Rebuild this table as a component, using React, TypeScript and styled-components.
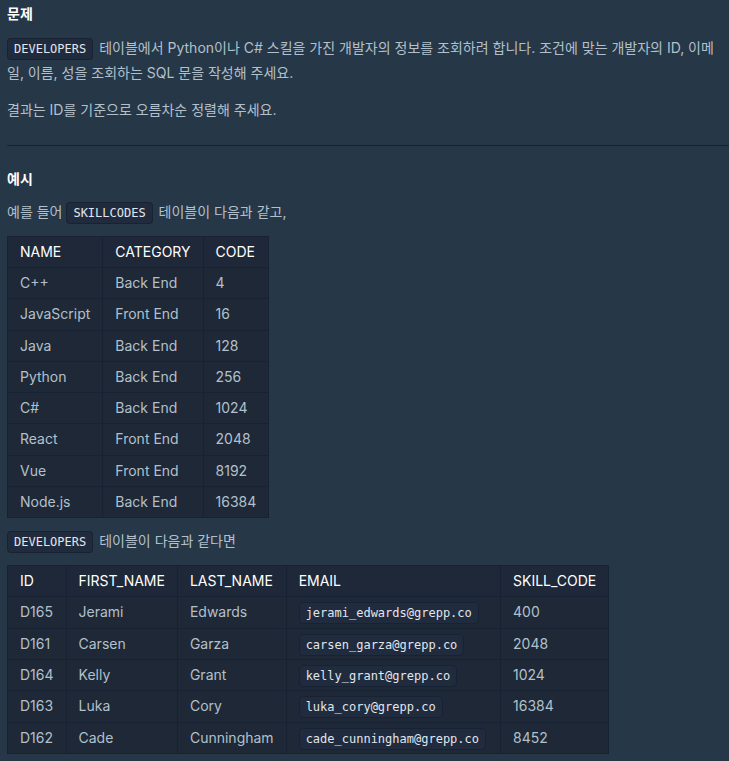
import React from "react";
import styled, { createGlobalStyle } from "styled-components";

const GlobalStyle = createGlobalStyle`
  html, body {
    margin: 0;
    padding: 0;
    background: #263747;
  }
  body {
    font-family: Inter, "Noto Sans CJK KR", sans-serif;
    color: #b2c0cc;
  }
`;

const Page = styled.div`
  padding: 0 0 0 7px;
  overflow: hidden;
`;

const Heading = styled.h5`
  margin: 0;
  padding-top: 2px;
  font-size: 14px;
  line-height: 24px;
  font-weight: 700;
  color: #ffffff;
`;

const Para = styled.p<{ $gap?: number }>`
  margin: ${({ $gap }) => $gap ?? 12}px 0 0;
  font-size: 14px;
  line-height: 25px;
  color: #b2c0cc;
`;

const Code = styled.code`
  font-family: "DejaVu Sans Mono", "Liberation Mono", monospace;
  font-size: 12px;
  line-height: 1;
  color: #e0e6ec;
  background: #202b3d;
  border: 1px solid #172334;
  border-radius: 4px;
  padding: 3px 6px;
  margin-right: 2px;
`;

const Rule = styled.hr`
  border: 0;
  border-top: 1px solid #172334;
  margin: 23px 0 19px;
`;

const Table = styled.table<{ $gap?: number }>`
  border-collapse: collapse;
  margin-top: ${({ $gap }) => $gap ?? 12}px;
  font-size: 14px;
  background: #1e2836;
`;

const Th = styled.th`
  text-align: left;
  font-weight: 400;
  color: #ffffff;
  padding: 6px 12px;
  line-height: 18px;
  border: 1px solid #172334;
  background: #1e2838;
  white-space: nowrap;
`;

const Td = styled.td`
  padding: 6px 12px;
  line-height: 18.3px;
  border: 1px solid #172334;
  color: #b2c0cc;
  white-space: nowrap;
`;

const skills = [
  ["C++", "Back End", "4"],
  ["JavaScript", "Front End", "16"],
  ["Java", "Back End", "128"],
  ["Python", "Back End", "256"],
  ["C#", "Back End", "1024"],
  ["React", "Front End", "2048"],
  ["Vue", "Front End", "8192"],
  ["Node.js", "Back End", "16384"],
];

const developers = [
  ["D165", "Jerami", "Edwards", "jerami_edwards@grepp.co", "400"],
  ["D161", "Carsen", "Garza", "carsen_garza@grepp.co", "2048"],
  ["D164", "Kelly", "Grant", "kelly_grant@grepp.co", "1024"],
  ["D163", "Luka", "Cory", "luka_cory@grepp.co", "16384"],
  ["D162", "Cade", "Cunningham", "cade_cunningham@grepp.co", "8452"],
];

export default function App() {
  return (
    <Page>
      <GlobalStyle />
      <Heading>문제</Heading>
      <Para $gap={9}>
        <Code>DEVELOPERS</Code> 테이블에서 Python이나 C# 스킬을 가진 개발자의 정보를 조회하려 합니다. 조건에 맞는 개발자의 ID, 이메일, 이름, 성을 조회하는 SQL 문을 작성해 주세요.
      </Para>
      <Para>결과는 ID를 기준으로 오름차순 정렬해 주세요.</Para>
      <Rule />
      <Heading>예시</Heading>
      <Para $gap={8}>
        예를 들어 <Code>SKILLCODES</Code> 테이블이 다음과 같고,
      </Para>
      <Table>
        <thead>
          <tr>
            <Th>NAME</Th>
            <Th>CATEGORY</Th>
            <Th>CODE</Th>
          </tr>
        </thead>
        <tbody>
          {skills.map((r) => (
            <tr key={r[0]}>
              {r.map((c, i) => (
                <Td key={i}>{c}</Td>
              ))}
            </tr>
          ))}
        </tbody>
      </Table>
      <Para $gap={10}>
        <Code>DEVELOPERS</Code> 테이블이 다음과 같다면
      </Para>
      <Table>
        <thead>
          <tr>
            <Th>ID</Th>
            <Th>FIRST_NAME</Th>
            <Th>LAST_NAME</Th>
            <Th>EMAIL</Th>
            <Th>SKILL_CODE</Th>
          </tr>
        </thead>
        <tbody>
          {developers.map((r) => (
            <tr key={r[0]}>
              <Td>{r[0]}</Td>
              <Td>{r[1]}</Td>
              <Td>{r[2]}</Td>
              <Td>
                <Code>{r[3]}</Code>
              </Td>
              <Td>{r[4]}</Td>
            </tr>
          ))}
        </tbody>
      </Table>
    </Page>
  );
}
